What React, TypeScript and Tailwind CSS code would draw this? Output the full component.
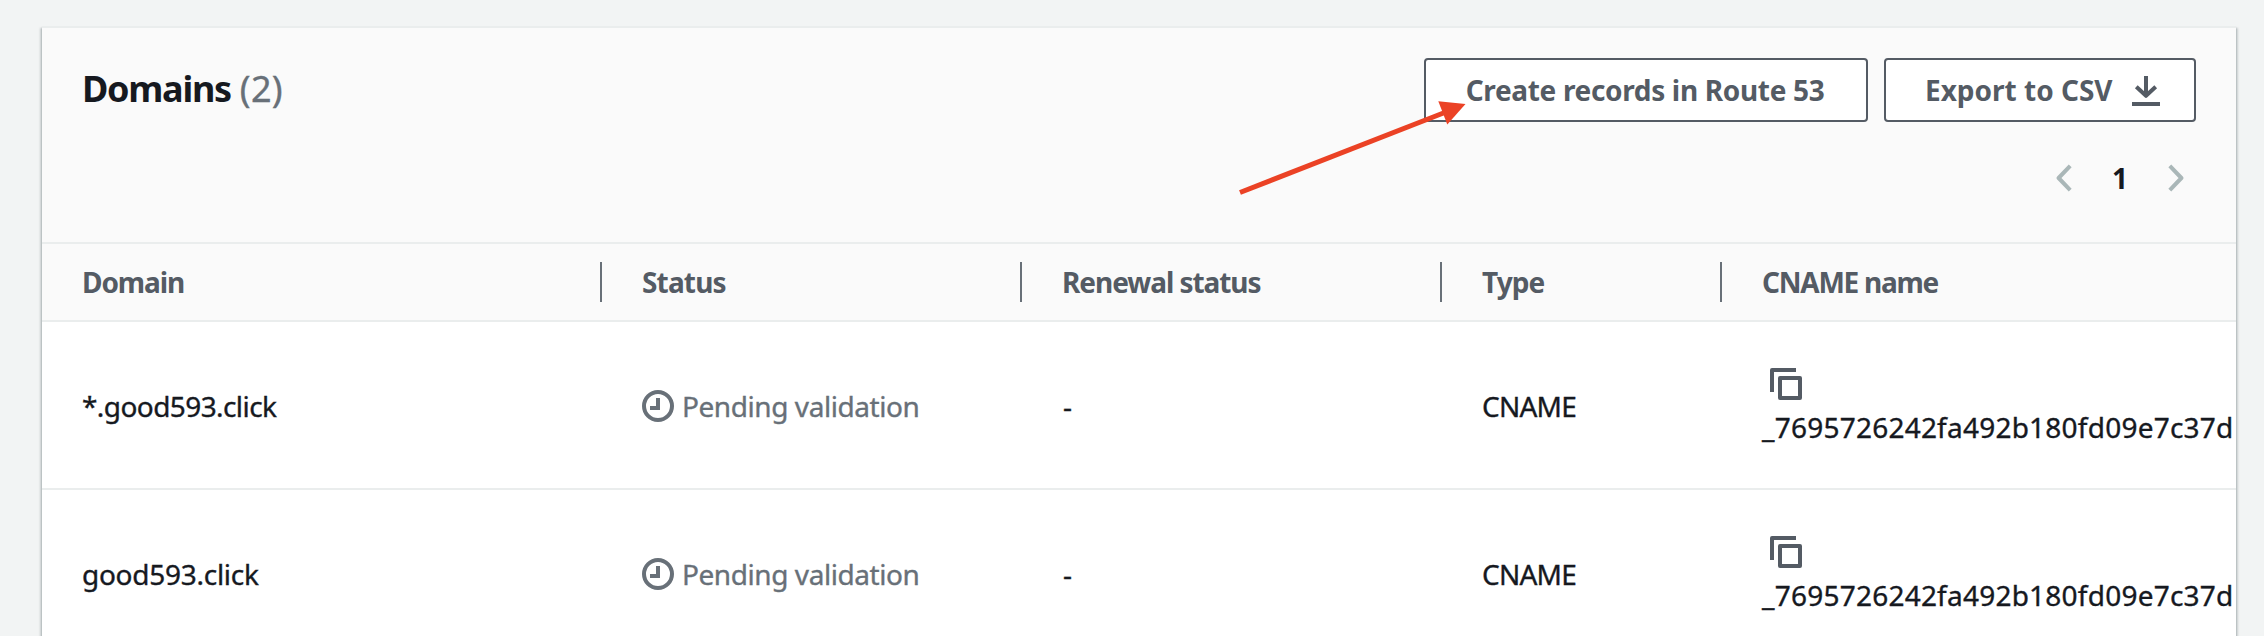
import type { ReactNode } from "react";

function DownloadIcon() {
  return (
    <svg className="block h-8 w-8" viewBox="0 0 32 32" fill="none" stroke="currentColor" strokeWidth="4">
      <path d="M16 2v20" />
      <path d="M6.3 12.7 16 21.8l9.7-9.1" strokeLinejoin="round" />
      <path d="M2 30h28" />
    </svg>
  );
}

function Chevron({ flip = false }: { flip?: boolean }) {
  return (
    <svg
      className={flip ? "block h-7 w-4 -scale-x-100" : "block h-7 w-4"}
      viewBox="0 0 16 28"
      fill="none"
      stroke="#aab7b8"
      strokeWidth="4"
      strokeLinejoin="round"
    >
      <path d="M14.2 1.8 2.6 14l11.6 12.2" />
    </svg>
  );
}

function ClockIcon() {
  return (
    <svg className="block h-8 w-8 shrink-0" viewBox="0 0 32 32" fill="none" stroke="currentColor" strokeWidth="4">
      <circle cx="16" cy="16" r="14" />
      <path d="M16 8v10H8" />
    </svg>
  );
}

function CopyIcon() {
  return (
    <svg className="ml-2 block h-8 w-8" viewBox="0 0 32 32" fill="none" stroke="#545b64" strokeWidth="4" strokeLinejoin="round">
      <path d="M2 24V2h24" />
      <rect x="10" y="10" width="20" height="20" />
    </svg>
  );
}

function HeaderCell({ children, last = false }: { children: ReactNode; last?: boolean }) {
  return (
    <div className="flex h-[76px] items-center justify-between">
      <div>{children}</div>
      {!last && <div className="h-10 w-0.5 bg-[#687078]" />}
    </div>
  );
}

function Row({ domain, border = false }: { domain: ReactNode; border?: boolean }) {
  return (
    <div
      className={
        border
          ? "h-[168px] border-b-2 border-[#eaeded] pl-10 text-[#16191f]"
          : "h-[168px] pl-10 text-[#16191f]"
      }
    >
      <div className="grid h-[166px] w-[2192px] grid-cols-[560px_420px_420px_280px_512px] items-center [-webkit-text-stroke:0.35px_currentColor]">
        <div className="pt-0.5">{domain}</div>
        <div className="flex items-center gap-2 pt-0.5 text-[#687078]">
          <ClockIcon />
          <span className="tracking-[-0.43px]">Pending validation</span>
        </div>
        <div className="pl-px pt-0.5">-</div>
        <div className="pt-0.5 tracking-[-0.77px]">CNAME</div>
        <div className="pt-1">
          <CopyIcon />
          <div className="mt-[7px] tracking-[0.23px]">_7695726242fa492b180fd09e7c37d</div>
        </div>
      </div>
    </div>
  );
}

export default function App() {
  return (
    <div className="relative h-[636px] w-[2264px] overflow-hidden bg-[#f2f4f4] pl-[42px] pr-[28px] pt-[26px] font-['Noto_Sans',sans-serif] text-[28px] leading-10">
      <main className="h-[640px] w-[2194px] overflow-hidden border-t-2 border-[#eaeded] bg-white shadow-[0_2px_2px_0_rgba(0,28,36,0.3),2px_2px_2px_0_rgba(0,28,36,0.15),-2px_2px_2px_0_rgba(0,28,36,0.15)]">
        <header className="h-[216px] border-b-2 border-[#eaeded] bg-[#fafafa] pl-10 pr-10 pt-[30px]">
          <div className="flex justify-between">
            <h1 className="flex h-16 items-center gap-[9px] pb-0.5 text-[36px]">
              <span className="font-bold tracking-[-1.28px] text-[#16191f]">Domains</span>
              <span className="tracking-[0.3px] text-[#687078] [-webkit-text-stroke:0.35px_currentColor]">(2)</span>
            </h1>
            <div className="flex gap-4 font-bold text-[#545b64]">
              <button className="flex h-16 w-[444px] items-center justify-center rounded border-2 border-[#545b64] bg-white pr-0.5 tracking-[-0.33px]">
                Create records in Route 53
              </button>
              <button className="flex h-16 w-[312px] items-center rounded border-2 border-[#545b64] bg-white pl-[39px]">
                <span>Export to CSV</span>
                <span className="ml-[17px]">
                  <DownloadIcon />
                </span>
              </button>
            </div>
          </div>
          <nav className="mt-[42px] flex h-7 items-center justify-end pr-3">
            <Chevron />
            <span className="w-24 text-center font-bold text-[#16191f]">1</span>
            <Chevron flip />
          </nav>
        </header>
        <div className="border-b-2 border-[#eaeded] bg-[#fafafa] pl-10 font-bold text-[#545b64]">
          <div className="grid w-[2192px] grid-cols-[520px_420px_420px_280px_512px]">
            <HeaderCell>
              <span className="tracking-[-1.09px]">Domain</span>
            </HeaderCell>
            <HeaderCell>
              <span className="ml-10 tracking-[-0.84px]">Status</span>
            </HeaderCell>
            <HeaderCell>
              <span className="ml-10 tracking-[-1.05px]">Renewal status</span>
            </HeaderCell>
            <HeaderCell>
              <span className="ml-10 tracking-[-0.96px]">Type</span>
            </HeaderCell>
            <HeaderCell last>
              <span className="ml-10 tracking-[-1.24px]">CNAME name</span>
            </HeaderCell>
          </div>
        </div>
        <Row border domain={<span className="tracking-[-0.58px]">*.good593.click</span>} />
        <Row domain={<span className="tracking-[-0.27px]">good593.click</span>} />
      </main>
      <svg className="pointer-events-none absolute left-[1220px] top-[90px] h-[110px] w-[260px]" viewBox="1220 90 260 110">
        <path d="M1240 192.5 1446 112" stroke="#eb4225" strokeWidth="5" />
        <path d="M1438.3 101.3 1465.5 104 1447.3 124.5Z" fill="#eb4225" />
      </svg>
    </div>
  );
}
